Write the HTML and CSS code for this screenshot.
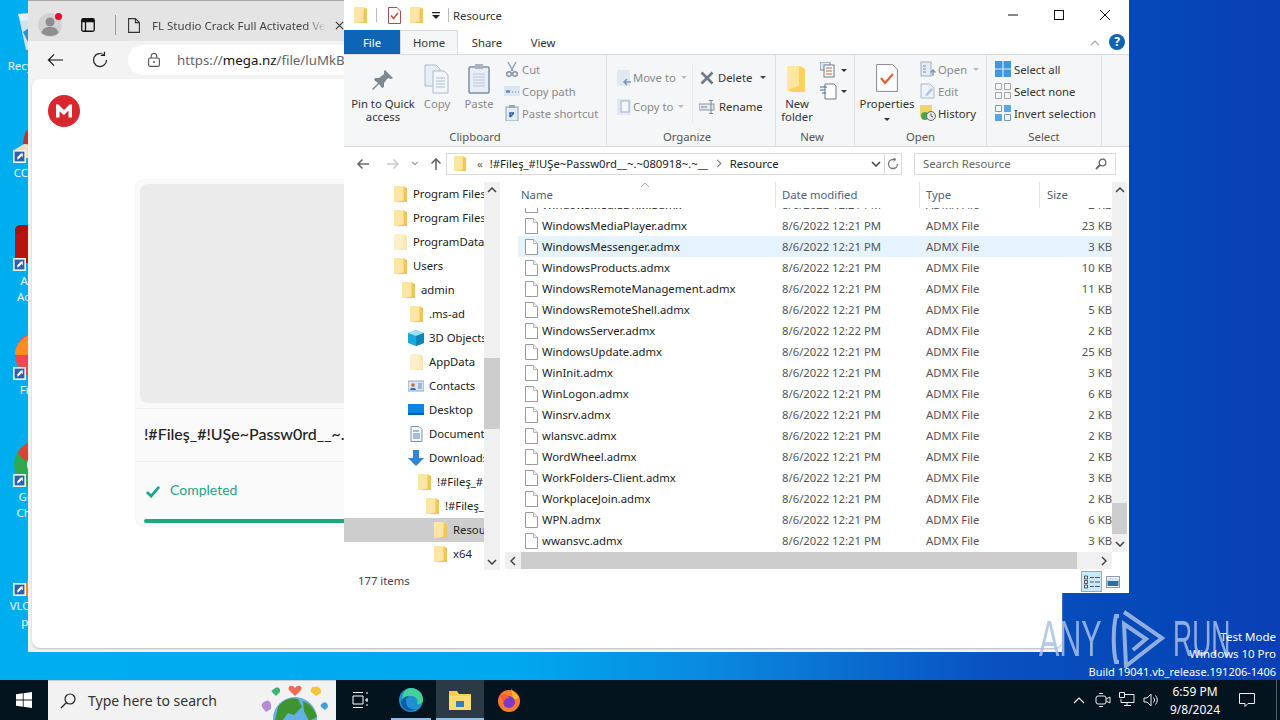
FILE: index.html
```html
<!DOCTYPE html>
<html lang="en">
<head>
<meta charset="utf-8">
<title>Resource</title>
<link rel="stylesheet" href="styles.css">
</head>
<body>
<svg class="sprite" aria-hidden="true">
  <symbol id="folder" viewBox="0 0 14 18"><path d="M0 1h9.500l3.500 2v14H0z" fill="#fddc84"/><path d="M10 1.500l3 1.500v14H2.500l7-1.500z" fill="#f2c558"/><path d="M0 1h9v14.500L0 17z" fill="#fee5a0"/></symbol>
  <symbol id="folder-light" viewBox="0 0 14 18"><path d="M0 1h9.500l3.500 2v14H0z" fill="#fdf0c8"/><path d="M10 1.500l3 1.500v14H2.500l7-1.500z" fill="#f8e6b4"/></symbol>
  <symbol id="file" viewBox="0 0 13 16"><path d="M.5.500h8l4 4v11H.5z" fill="#fff" stroke="#9a9a9a"/><path d="M8.500.500v4h4" fill="#f2f2f2" stroke="#b5b5b5"/></symbol>
  <symbol id="chk" viewBox="0 0 13 17"><path d="M.5.500h8.500l3.500 3.500v12.500H.5z" fill="#fff" stroke="#a05050"/><path d="M3 8.500l2.500 3L10 6" fill="none" stroke="#d9463a" stroke-width="1.500"/></symbol>
  <symbol id="chev-down" viewBox="0 0 10 6"><path d="M1 1l4 4 4-4" fill="none" stroke="#444" stroke-width="1.500"/></symbol>
  <symbol id="chev-up" viewBox="0 0 10 6"><path d="M1 5l4-4 4 4" fill="none" stroke="#444" stroke-width="1.500"/></symbol>
  <symbol id="shortcut" viewBox="0 0 12 12"><rect width="12" height="12" fill="#f4f4f4"/><rect x="1.500" y="1.500" width="9" height="9" fill="#2f5fa5"/><path d="M4 9V6.500L7 4H5l4-1v4L8 5.500 5.500 8z" fill="#fff"/></symbol>
</svg>

<main class="desktop">
  <div class="dicon d-recycle"><svg class="dglyph" viewBox="0 0 48 48"><path d="M4 4l34-2 4 8-4 30H12L6 12z" fill="#cfe2ee"/><path d="M4 4l34-2-1 6-30 3z" fill="#e6f0f6"/><path d="M9 22l6-4 4 8-5 6z" fill="#2f8fd0"/></svg><span>Recycle Bin</span></div>
  <div class="dicon d-cc"><svg class="dglyph" viewBox="0 0 48 48"><path d="M9 26C10 20 11 14 13 13l20 8v20H9z" fill="#b93a2a"/><path d="M0 33l10-6 30 2v12H0z" fill="#f2dcc4"/></svg><svg class="sc"><use href="#shortcut"/></svg><span>CCleaner</span></div>
  <div class="dicon d-adobe"><svg class="dglyph" viewBox="0 0 48 48"><rect x="1" y="0" width="46" height="38" rx="5" fill="#a8120e"/><path d="M1 10c8-6 16-6 24-8v36H1z" fill="#b8140f"/></svg><svg class="sc"><use href="#shortcut"/></svg><span>Adobe<br>Acrobat</span></div>
  <div class="dicon d-fox"><svg class="dglyph" viewBox="0 0 48 48"><circle cx="24" cy="21" r="23" fill="#f2474f"/><path d="M1 18C3 8 10 3 16 1c-2 4 0 7 4 8l12 12H1z" fill="#ff8a1f"/></svg><svg class="sc"><use href="#shortcut"/></svg><span>Firefox</span></div>
  <div class="dicon d-chrome"><svg class="dglyph" viewBox="0 0 48 48"><circle cx="24" cy="24" r="24" fill="#2fa84f"/><path d="M3 12a24 24 0 0 1 42 0H24l-12 8z" fill="#db4437"/><circle cx="24" cy="24" r="11" fill="#eeeeee"/></svg><svg class="sc"><use href="#shortcut"/></svg><span>Google<br>Chrome</span></div>
  <div class="dicon d-vlc"><svg class="dglyph" viewBox="0 0 48 48"><path d="M6 46L16 26l8 0 4 20z" fill="#e98a1c"/></svg><svg class="sc"><use href="#shortcut"/></svg><span>VLC media<br>player</span></div>

  <section class="browser">
    <div class="tabstrip">
      <div class="avatar"><svg viewBox="0 0 24 24" class="avatar-svg"><circle cx="12" cy="12" r="12" fill="#d2d2d2"/><circle cx="12" cy="9" r="4.500" fill="#8f8f8f"/><path d="M3.500 20c1-5 4-6 8.500-6s7.500 1 8.500 6c-4 4-13 4-17 0z" fill="#8f8f8f"/></svg><i class="dot"></i></div>
      <svg class="tabs-ico" viewBox="0 0 14 14"><rect x=".75" y=".75" width="12.500" height="12.500" rx="1.500" fill="none" stroke="#111" stroke-width="1.300"/><path d="M.75 3.500h12.500M4.500 3.500v9.500" stroke="#111" stroke-width="1.300" fill="none"/><rect x="1" y="1" width="12" height="2.500" fill="#111"/></svg>
      <i class="tab-sep"></i>
      <svg class="tab-doc" viewBox="0 0 12 15"><path d="M.6.600h6.800l4 4v9.800H.6z M7.400.600v4h4" fill="none" stroke="#333" stroke-width="1.100"/></svg>
      <span class="tab-title">FL Studio Crack Full Activated Version</span>
      <svg class="tab-x" viewBox="0 0 10 10"><path d="M1 1l8 8M9 1l-8 8" stroke="#333" stroke-width="1.200"/></svg>
    </div>
    <div class="toolbar">
      <svg class="tb-back" viewBox="0 0 18 14"><path d="M17 7H1.500M7.500 1L1.500 7l6 6" fill="none" stroke="#111" stroke-width="1.200"/></svg>
      <svg class="tb-reload" viewBox="0 0 18 18"><path d="M15.500 9A6.500 6.500 0 1 1 13 3.900" fill="none" stroke="#222" stroke-width="1.200"/><path d="M13.500 .8v3.700H9.800" fill="none" stroke="#222" stroke-width="1.200"/></svg>
      <div class="url">
        <svg class="lock" viewBox="0 0 12 14"><rect x=".6" y="5" width="10.800" height="8.400" rx="1.500" fill="none" stroke="#555" stroke-width="1.100"/><path d="M3.200 5V3.200a2.800 2.800 0 0 1 5.600 0V5" fill="none" stroke="#555" stroke-width="1.100"/><circle cx="6" cy="9" r="1" fill="#555"/></svg>
        <span class="url-text">https://<b>mega.nz</b>/file/luMkBC</span>
      </div>
    </div>
    <div class="page">
      <svg class="mega" viewBox="0 0 32 32"><circle cx="16" cy="16" r="16" fill="#d9272e"/><path d="M8 22.500V9.500h2.500L16 15l5.500-5.500H24v13h-3.500v-7L16 20l-4.500-3.500v6z" fill="#fff"/></svg>
      <div class="card">
        <div class="preview"></div>
        <div class="fname">!#Fileş_#!UŞe~Passw0rd__~.~080918~.~__.zip</div>
        <div class="done"><svg class="tick" viewBox="0 0 16 14"><path d="M1.500 7.500l4.500 4.500 8.500-10" fill="none" stroke="#17a88b" stroke-width="3"/></svg><span>Completed</span></div>
        <div class="bar"></div>
      </div>
    </div>
  </section>

  <section class="explorer">
    <header class="titlebar">
      <svg class="qa qa1"><use href="#folder"/></svg><i class="qa-sep"></i>
      <svg class="qa qa2"><use href="#chk"/></svg>
      <svg class="qa qa3"><use href="#folder"/></svg>
      <svg class="qa-drop" viewBox="0 0 8 7"><path d="M0 0h8v1.200H0zM0 3h8L4 7z" fill="#222"/></svg><i class="qa-sep sep2"></i>
      <span class="wintitle">Resource</span>
      <div class="winbtns">
        <svg viewBox="0 0 12 12" class="wb"><path d="M1 6h10" stroke="#111"/></svg>
        <svg viewBox="0 0 12 12" class="wb"><rect x="1.500" y="1.500" width="9" height="9" fill="none" stroke="#111"/></svg>
        <svg viewBox="0 0 12 12" class="wb"><path d="M1 1l10 10M11 1L1 11" stroke="#111"/></svg>
      </div>
    </header>
    <nav class="tabs">
      <span class="t-file">File</span><span class="t-home">Home</span><span class="t-share">Share</span><span class="t-view">View</span>
      <svg class="collapse" viewBox="0 0 10 6"><path d="M1 5l4-4 4 4" fill="none" stroke="#aaa" stroke-width="1.200"/></svg>
      <span class="help">?</span>
    </nav>
    <div class="ribbon">
      <div class="group g-clip">
        <div class="gbody">
          <div class="big w-pin"><svg class="bigico pinico" viewBox="0 0 24 24"><path d="M14 2l8 8-2 1-3-1-4 5 0 4-2 1-3-4-6 6-1-1 6-6-4-3 1-2h4l5-4-0-3z" fill="#7f8790"/></svg><span>Pin to Quick<br>access</span></div>
          <div class="big w-copy dis"><svg class="bigico copyico" viewBox="0 0 26 30"><path d="M1 1h11l4 4v17H1z" fill="#e8eef6" stroke="#a9bbd2"/><path d="M9 7h11l4 4v18H9z" fill="#f3f6fa" stroke="#a9bbd2"/><path d="M12 14h9M12 17h9M12 20h9M12 23h9" stroke="#a9bbd2"/></svg><span>Copy</span></div>
          <div class="big w-paste dis"><svg class="bigico pasteico" viewBox="0 0 22 30"><rect x="1" y="3" width="20" height="26" rx="1" fill="#e9eef5" stroke="#7f8fa6" stroke-width="1.500"/><rect x="7" y="0" width="8" height="5" fill="#aab4c2"/><path d="M5 10h12M5 13h12M5 16h12M5 19h12M5 22h12" stroke="#b9c6d8"/></svg><span>Paste</span></div>
          <div class="smalls s-clip dis">
            <div class="sm"><svg class="ic16" viewBox="0 0 16 16"><path d="M4 1l5 9M12 1L7 10" stroke="#8ea3bd" stroke-width="1.500" fill="none"/><circle cx="5" cy="13" r="2.300" fill="none" stroke="#7f8ea3" stroke-width="1.400"/><circle cx="11" cy="13" r="2.300" fill="none" stroke="#7f8ea3" stroke-width="1.400"/></svg><span>Cut</span></div>
            <div class="sm"><svg class="ic16" viewBox="0 0 16 16"><rect y="3" width="16" height="10" fill="#dbe6f3"/><path d="M2 7l1 3 1-3 1 3 1-3M8 9h1M11 9h1M14 9h1" stroke="#6f8bad" fill="none"/></svg><span>Copy path</span></div>
            <div class="sm"><svg class="ic16" viewBox="0 0 16 16"><rect x="2" y="2" width="12" height="14" fill="#e3ebf5" stroke="#8fa3bc"/><rect x="5" y="0" width="6" height="3" fill="#9aa8ba"/><path d="M6 12V8h4M6 12l4-4" stroke="#2f5fa5" stroke-width="1.500" fill="none"/></svg><span>Paste shortcut</span></div>
          </div>
        </div>
        <div class="glabel">Clipboard</div>
      </div>
      <div class="group g-org">
        <div class="gbody">
          <div class="rows2 r-move dis">
            <div class="sm2"><svg class="ic16" viewBox="0 0 16 16"><rect x="1" y="0" width="13" height="16" fill="#e1e8f1"/><path d="M15 12H8M11 9l-3 3 3 3" stroke="#7d95b3" stroke-width="1.500" fill="none"/></svg><span>Move to</span><i class="caret light"></i></div>
            <div class="sm2"><svg class="ic16" viewBox="0 0 16 16"><rect x="1" y="0" width="14" height="16" fill="#e1e8f1"/><rect x="5" y="2" width="8" height="11" fill="#f4f7fb" stroke="#9eb1c8"/></svg><span>Copy to</span><i class="caret light"></i></div>
          </div>
          <i class="vsep"></i>
          <div class="rows2 r-del">
            <div class="sm2"><svg class="ic14" viewBox="0 0 14 14"><path d="M1.500 1.500l11 11M12.500 1.500l-11 11" stroke="#6c7a8a" stroke-width="2.600"/></svg><span>Delete</span><i class="caret"></i></div>
            <div class="sm2"><svg class="ic14 ren" viewBox="0 0 16 14"><rect x="0" y="4" width="15" height="6" fill="#e4e9ef" stroke="#8a97a6"/><path d="M12 0v14M10 .5h4M10 13.500h4" stroke="#7a8796"/><path d="M2 7h6" stroke="#7a8796"/></svg><span>Rename</span></div>
          </div>
        </div>
        <div class="glabel">Organize</div>
      </div>
      <div class="group g-new">
        <div class="gbody">
          <div class="big w-newf"><svg class="newico" viewBox="0 0 20 28"><path d="M0 1h13l5 3v23H5l-5-2z" fill="#fbd25f"/><path d="M0 1h12v20L0 25z" fill="#ffe79c"/></svg><span>New<br>folder</span></div>
          <div class="newsm">
            <div class="ns"><svg class="ic20" viewBox="0 0 20 17"><rect x="0" y="0" width="10" height="8" fill="#dbe8f5" stroke="#6d8fb3"/><rect x="4" y="3" width="10" height="12" fill="#fff" stroke="#777"/><path d="M6 6h6M6 9h6M6 12h6" stroke="#c2603f"/></svg><i class="caret dark"></i></div>
            <div class="ns"><svg class="ic20" viewBox="0 0 20 17"><path d="M5 1h9l2 2v13H5z" fill="#fff" stroke="#777"/><path d="M0 4h7M0 7h5M2 10h4" stroke="#2f6fb5" stroke-width="1.200"/></svg><i class="caret dark"></i></div>
          </div>
        </div>
        <div class="glabel">New</div>
      </div>
      <div class="group g-open">
        <div class="gbody">
          <div class="big w-prop"><svg class="propico" viewBox="0 0 22 28"><path d="M.6.600h16l4.800 5v21.800H.6z" fill="#fff" stroke="#888"/><path d="M5 14l4 5 8-9" fill="none" stroke="#e0603a" stroke-width="2.200"/></svg><span>Properties</span><i class="caret dark center"></i></div>
          <div class="smalls s-open">
            <div class="sm dis"><svg class="ic16" viewBox="0 0 16 16"><rect x="1" y="1" width="10" height="14" fill="#e4ebf3" stroke="#9db0c6"/><path d="M3 5h3M3 8h3M3 11h3" stroke="#7c8da3"/><path d="M13 9v6M10.500 11.500L13 9l2.500 2.500" stroke="#7d95b3" stroke-width="1.400" fill="none"/></svg><span>Open</span><i class="caret light"></i></div>
            <div class="sm dis"><svg class="ic16" viewBox="0 0 16 16"><path d="M1 1h9l4 4v10H1z" fill="#eef3f8" stroke="#a7bad0"/><path d="M5 12l6-7 2 2-6 6z" fill="#a9c7e6"/></svg><span>Edit</span></div>
            <div class="sm"><svg class="ic16" viewBox="0 0 16 16"><rect x="0" y="0" width="12" height="12" fill="#f1d46e"/><circle cx="5" cy="11" r="4" fill="#4ba84a"/><circle cx="11" cy="11" r="4.500" fill="#e8e8e8" stroke="#666"/><path d="M11 8.500V11l2 1" stroke="#555" fill="none"/></svg><span>History</span></div>
          </div>
        </div>
        <div class="glabel">Open</div>
      </div>
      <div class="group g-sel">
        <div class="gbody">
          <div class="smalls s-sel">
            <div class="sm"><svg class="ic16" viewBox="0 0 16 16"><rect width="16" height="16" fill="#3f97e0"/><path d="M8 0v16M0 8h16" stroke="#d6ecfb" stroke-width="1.200"/></svg><span>Select all</span></div>
            <div class="sm"><svg class="ic16" viewBox="0 0 16 16"><path d="M.5.500h6v6h-6zM9.500.500h6v6h-6zM.5 9.500h6v6h-6zM9.500 9.500h6v6h-6z" fill="none" stroke="#a5a5a5"/></svg><span>Select none</span></div>
            <div class="sm"><svg class="ic16" viewBox="0 0 16 16"><path d="M9 0h7v7H9zM0 9h7v7H0z" fill="#58a8e6"/><path d="M.5.500h6v6h-6zM9.500 9.500h6v6h-6z" fill="none" stroke="#6f9cc4"/></svg><span>Invert selection</span></div>
          </div>
        </div>
        <div class="glabel">Select</div>
      </div>
    </div>
    <div class="addrbar">
      <svg class="nav nav-back" viewBox="0 0 14 12"><path d="M13 6H2M6.500 1.500L2 6l4.500 4.500" fill="none" stroke="#6a6a6a" stroke-width="1.600"/></svg>
      <svg class="nav nav-fwd" viewBox="0 0 14 12"><path d="M1 6h11M7.500 1.500L12 6l-4.500 4.500" fill="none" stroke="#ccc" stroke-width="1.600"/></svg>
      <svg class="nav-dn" viewBox="0 0 10 6"><path d="M1.500 1L5 4.500 8.500 1" fill="none" stroke="#999" stroke-width="1.300"/></svg>
      <svg class="nav nav-up" viewBox="0 0 12 14"><path d="M6 13V2M1.500 6.500L6 2l4.500 4.500" fill="none" stroke="#6a6a6a" stroke-width="1.600"/></svg>
      <div class="addr">
        <svg class="addr-folder"><use href="#folder"/></svg>
        <span class="bc-more">«</span>
        <span class="bc">!#Fileş_#!UŞe~Passw0rd__~.~080918~.~__</span>
        <svg class="bc-sep" viewBox="0 0 6 10"><path d="M1 1l4 4-4 4" fill="none" stroke="#777" stroke-width="1.200"/></svg>
        <span class="bc bc-last">Resource</span>
        <svg class="addr-dd" viewBox="0 0 10 6"><use href="#chev-down"/></svg>
        <span class="addr-ref"><svg viewBox="0 0 12 12" class="refico"><path d="M10.500 6A4.500 4.500 0 1 1 6 1.500h2" fill="none" stroke="#777" stroke-width="1.300"/><path d="M6.500 0L9 1.500 6.500 3.500" fill="none" stroke="#777"/></svg></span>
      </div>
      <div class="search"><span>Search Resource</span><svg class="mag" viewBox="0 0 12 12"><circle cx="7.500" cy="4.500" r="3.300" fill="none" stroke="#666" stroke-width="1.300"/><path d="M5 7l-4 4" stroke="#666" stroke-width="1.800"/></svg></div>
    </div>
    <div class="content">
      <div class="tree">
        <ul class="tree-list">
          <li class="l0"><svg class="tf"><use href="#folder"/></svg><span>Program Files</span></li>
          <li class="l0"><svg class="tf"><use href="#folder"/></svg><span>Program Files (x86)</span></li>
          <li class="l0"><svg class="tf"><use href="#folder-light"/></svg><span>ProgramData</span></li>
          <li class="l0"><svg class="tf"><use href="#folder"/></svg><span>Users</span></li>
          <li class="l1"><svg class="tf"><use href="#folder"/></svg><span>admin</span></li>
          <li class="l2"><svg class="tf"><use href="#folder"/></svg><span>.ms-ad</span></li>
          <li class="l2s"><svg class="ts" viewBox="0 0 16 16"><path d="M8 0l8 3v10l-8 3-8-3V3z" fill="#1aa6d8"/><path d="M8 0l8 3-8 3-8-3z" fill="#9be4f4"/><path d="M8 6l8-3v10l-8 3z" fill="#0c86b8"/></svg><span>3D Objects</span></li>
          <li class="l2"><svg class="tf"><use href="#folder-light"/></svg><span>AppData</span></li>
          <li class="l2s"><svg class="ts" viewBox="0 0 16 16"><rect y="3" width="16" height="10" fill="#d6e5f3" stroke="#8fa8c2"/><circle cx="5" cy="7" r="1.800" fill="#c06a3a"/><path d="M2 12c0-3 6-3 6 0z" fill="#2f6fb5"/><path d="M10 6h4M10 8h4M10 10h4" stroke="#6f8bad"/></svg><span>Contacts</span></li>
          <li class="l2s"><svg class="ts" viewBox="0 0 16 16"><rect y="2" width="16" height="11" fill="#0a84e0"/><rect y="11" width="16" height="2" fill="#0960a8"/></svg><span>Desktop</span></li>
          <li class="l2s"><svg class="ts" viewBox="0 0 16 16"><path d="M3 .5h8l3 3v12H3z" fill="#f4f7fb" stroke="#7f93a8"/><path d="M5 5h6M5 8h7M5 10h7M5 12h7" stroke="#4d86bf"/></svg><span>Documents</span></li>
          <li class="l2s"><svg class="ts" viewBox="0 0 16 16"><path d="M5 0h6v8h5l-8 8-8-8h5z" fill="#2f86d9"/></svg><span>Downloads</span></li>
          <li class="l3"><svg class="tf"><use href="#folder"/></svg><span>!#Fileş_#!UŞe~Passw0rd</span></li>
          <li class="l4"><svg class="tf"><use href="#folder"/></svg><span>!#Fileş_#!UŞe~Passw0rd</span></li>
          <li class="l5 sel"><svg class="tf"><use href="#folder"/></svg><span>Resource</span></li>
          <li class="l5"><svg class="tf"><use href="#folder"/></svg><span>x64</span></li>
        </ul>
        <div class="vscroll tree-scroll">
          <svg class="sa" viewBox="0 0 10 6"><use href="#chev-up"/></svg>
          <div class="track"><div class="thumb t-tree"></div></div>
          <svg class="sa" viewBox="0 0 10 6"><use href="#chev-down"/></svg>
        </div>
      </div>
      <div class="pane">
        <div class="pane-top">
          <div class="listwrap">
            <div class="lhead">
              <span class="h h-name">Name</span><span class="h h-date">Date modified</span><span class="h h-type">Type</span><span class="h h-size">Size</span>
              <svg class="sortcaret" viewBox="0 0 10 6"><path d="M1 5l4-4 4 4" fill="none" stroke="#aaa"/></svg>
            </div>
            <div class="rows">
              <div class="row"><span class="n"><svg class="fi"><use href="#file"/></svg>WindowsMediaDRM.admx</span><span>8/6/2022 12:21 PM</span><span>ADMX File</span><span class="s">2 KB</span></div>
              <div class="row"><span class="n"><svg class="fi"><use href="#file"/></svg>WindowsMediaPlayer.admx</span><span>8/6/2022 12:21 PM</span><span>ADMX File</span><span class="s">23 KB</span></div>
              <div class="row hov"><span class="n"><svg class="fi"><use href="#file"/></svg>WindowsMessenger.admx</span><span>8/6/2022 12:21 PM</span><span>ADMX File</span><span class="s">3 KB</span></div>
              <div class="row"><span class="n"><svg class="fi"><use href="#file"/></svg>WindowsProducts.admx</span><span>8/6/2022 12:21 PM</span><span>ADMX File</span><span class="s">10 KB</span></div>
              <div class="row"><span class="n"><svg class="fi"><use href="#file"/></svg>WindowsRemoteManagement.admx</span><span>8/6/2022 12:21 PM</span><span>ADMX File</span><span class="s">11 KB</span></div>
              <div class="row"><span class="n"><svg class="fi"><use href="#file"/></svg>WindowsRemoteShell.admx</span><span>8/6/2022 12:21 PM</span><span>ADMX File</span><span class="s">5 KB</span></div>
              <div class="row"><span class="n"><svg class="fi"><use href="#file"/></svg>WindowsServer.admx</span><span>8/6/2022 12:22 PM</span><span>ADMX File</span><span class="s">2 KB</span></div>
              <div class="row"><span class="n"><svg class="fi"><use href="#file"/></svg>WindowsUpdate.admx</span><span>8/6/2022 12:21 PM</span><span>ADMX File</span><span class="s">25 KB</span></div>
              <div class="row"><span class="n"><svg class="fi"><use href="#file"/></svg>WinInit.admx</span><span>8/6/2022 12:21 PM</span><span>ADMX File</span><span class="s">3 KB</span></div>
              <div class="row"><span class="n"><svg class="fi"><use href="#file"/></svg>WinLogon.admx</span><span>8/6/2022 12:21 PM</span><span>ADMX File</span><span class="s">6 KB</span></div>
              <div class="row"><span class="n"><svg class="fi"><use href="#file"/></svg>Winsrv.admx</span><span>8/6/2022 12:21 PM</span><span>ADMX File</span><span class="s">2 KB</span></div>
              <div class="row"><span class="n"><svg class="fi"><use href="#file"/></svg>wlansvc.admx</span><span>8/6/2022 12:21 PM</span><span>ADMX File</span><span class="s">2 KB</span></div>
              <div class="row"><span class="n"><svg class="fi"><use href="#file"/></svg>WordWheel.admx</span><span>8/6/2022 12:21 PM</span><span>ADMX File</span><span class="s">2 KB</span></div>
              <div class="row"><span class="n"><svg class="fi"><use href="#file"/></svg>WorkFolders-Client.admx</span><span>8/6/2022 12:21 PM</span><span>ADMX File</span><span class="s">3 KB</span></div>
              <div class="row"><span class="n"><svg class="fi"><use href="#file"/></svg>WorkplaceJoin.admx</span><span>8/6/2022 12:21 PM</span><span>ADMX File</span><span class="s">2 KB</span></div>
              <div class="row"><span class="n"><svg class="fi"><use href="#file"/></svg>WPN.admx</span><span>8/6/2022 12:21 PM</span><span>ADMX File</span><span class="s">6 KB</span></div>
              <div class="row"><span class="n"><svg class="fi"><use href="#file"/></svg>wwansvc.admx</span><span>8/6/2022 12:21 PM</span><span>ADMX File</span><span class="s">3 KB</span></div>
            </div>
          </div>
          <div class="vscroll list-scroll">
            <svg class="sa" viewBox="0 0 10 6"><use href="#chev-up"/></svg>
            <div class="track"><div class="thumb t-list"></div></div>
            <svg class="sa" viewBox="0 0 10 6"><use href="#chev-down"/></svg>
          </div>
        </div>
        <div class="hscroll">
          <svg class="sah" viewBox="0 0 6 10"><path d="M5 1L1 5l4 4" fill="none" stroke="#444" stroke-width="1.500"/></svg>
          <div class="hthumb"></div><div class="hrest"></div>
          <svg class="sah" viewBox="0 0 6 10"><path d="M1 1l4 4-4 4" fill="none" stroke="#444" stroke-width="1.500"/></svg>
        </div>
      </div>
    </div>
    <footer class="status">
      <span class="count">177 items</span>
      <div class="views">
        <span class="v-det"><svg viewBox="0 0 16 14" class="v-ico"><path d="M.5 1h3v3h-3zM.5 5.500h3v3h-3zM.5 10h3v3h-3z" fill="none" stroke="#555"/><path d="M6 2.500h4M11 2.500h5M6 7h4M11 7h5M6 11.500h4M11 11.500h5" stroke="#555"/></svg></span>
        <span class="v-lrg"><svg viewBox="0 0 14 12" class="v-ico2"><rect x=".5" y=".5" width="13" height="11" fill="#fff" stroke="#8a9aaa"/><rect x="1.500" y="4" width="11" height="6" fill="#2a6fa8"/><rect x="1.500" y="2" width="11" height="3" fill="#cfe3f2"/></svg></span>
      </div>
    </footer>
  </section>

  <div class="watermark">
    <span class="wm-t wm-any">ANY</span>
    <svg class="wm-logo" viewBox="0 0 55 58"><path d="M9 6H6C3 18 3 40 6 52h3M14 2l38 26-36 28L14 14l22 15-13 11" fill="none" stroke="#a9c0e8" stroke-width="4"/></svg>
    <span class="wm-t wm-run">RUN</span>
  </div>
  <div class="sysinfo"><span>Test Mode</span><span class="edition">Windows 10 Pro</span><span class="build">Build 19041.vb_release.191206-1406</span></div>

  <footer class="taskbar">
    <svg class="start" viewBox="0 0 16 16"><path d="M0 2.300l6.800-1v6.300H0zM7.600 1.200L16 0v7.600H7.600zM0 8.400h6.800v6.300l-6.800-1zM7.600 8.400H16V16l-8.400-1.200z" fill="#fff"/></svg>
    <div class="searchbox">
      <svg class="sb-mag" viewBox="0 0 16 16"><circle cx="10" cy="6" r="5" fill="none" stroke="#222" stroke-width="1.200"/><path d="M6.500 9.500L1 15" stroke="#222" stroke-width="1.300"/></svg>
      <span class="sb-text">Type here to search</span>
      <svg class="doodle" viewBox="0 0 72 40"><circle cx="36" cy="38" r="22" fill="#63b0e6"/><path d="M19 26c6-8 14-10 20-8l4 8-8 8-6-2-6 8H16zM44 20c6 2 12 8 14 16l-8 4-5-10z" fill="#3f9330"/><path d="M36 7c-3-4-8-2-6 2l6 6 6-6c2-4-3-6-6-2z" fill="#ef6a55"/><path d="M55 6c4-2 8 2 7 6l-5 3-5-4c-1-3 1-5 3-5z" fill="#f2c63a"/><path d="M15 8c3-3 7-1 6 3l-4 4-4-4c-1-1 0-2 2-3z" fill="#3cb371"/><path d="M7 20c3-2 6 2 5 8l-5 3-4-5c-1-3 1-5 4-6z" fill="#b58ad6"/><path d="M64 22c2-2 5 0 5 4l-3 3-4-3c-1-2 0-3 2-4z" fill="#3f9fe0"/></svg>
    </div>
    <svg class="taskview" viewBox="0 0 16 16"><path d="M1 .5h10M1 15.500h10M1 4h10v8H1zM14 1h2M14 7h2v2h-2zM14 13h2" stroke="#fff" fill="none"/></svg>
    <div class="tb-item ti-edge"><svg class="tb-app" viewBox="0 0 24 24"><circle cx="12" cy="12" r="12" fill="#1f8fd0"/><path d="M12 0a12 12 0 0 1 12 12c0 3-3 5-6 4 2-4-1-8-6-8-5 0-8 3-9 5C3 6 6 0 12 0z" fill="#41d29a"/><path d="M7 14c0 5 5 8 9 7-5 4-13 1-14-7 1-4 5-6 8-6-2 1-3 3-3 6z" fill="#0c5ea8"/></svg></div>
    <div class="tb-item ti-exp"><svg class="tb-app" viewBox="0 0 24 24"><path d="M1 3h8l2 3h12v16H1z" fill="#f7cf4e"/><rect x="1" y="8" width="22" height="14" fill="#fbdc6e"/><rect x="8" y="13" width="8" height="6" fill="#2f7fc1"/></svg></div>
    <div class="tb-item ti-fox"><svg class="tb-app" viewBox="0 0 24 24"><circle cx="12" cy="13" r="11" fill="#ff7b2a"/><path d="M14 0c1 4 6 5 8 10l-6 2z" fill="#ffb52e"/><circle cx="12" cy="14" r="6" fill="#7b3bc8"/><path d="M3 8c4-3 8-1 9 2-3 0-5 2-5 5z" fill="#ff5a3c"/></svg></div>
    <div class="tray">
      <svg class="tr tr-up" viewBox="0 0 12 8"><path d="M1 7l5-5 5 5" fill="none" stroke="#eee" stroke-width="1.200"/></svg>
      <svg class="tr" viewBox="0 0 16 16"><rect x="1" y="4" width="10" height="8" rx="2" fill="none" stroke="#eee"/><path d="M11 7l4-2v6l-4-2M4 1.500h4M4 14.500h4" fill="none" stroke="#eee"/></svg>
      <svg class="tr" viewBox="0 0 16 16"><path d="M5.500 2.500H15v8H2V7M8 10.500v3M5 13.500h7M.5.500h5v5h-5z" fill="none" stroke="#eee"/></svg>
      <svg class="tr tr-last" viewBox="0 0 16 16"><path d="M1 6h3l4-4v12l-4-4H1zM10.500 5.500a3.500 3.500 0 0 1 0 5M12.500 3.500a6.500 6.500 0 0 1 0 9" fill="none" stroke="#eee"/></svg>
      <div class="clock"><span>6:59 PM</span><span>9/8/2024</span></div>
      <svg class="notif" viewBox="0 0 16 16"><path d="M.5 1.500h15v10H9L6 14.500v-3H.5z" fill="none" stroke="#eee"/></svg>
      <i class="showdesk"></i>
    </div>
  </footer>
</main>
</body>
</html>
```
FILE: styles.css
```css
* { box-sizing: border-box; }
html, body { margin: 0; height: 100%; }
body { font-family: "Noto Sans", "Liberation Sans", sans-serif; font-size: 12px; color: #333; overflow: hidden; }
i { display: block; font-style: normal; }
svg { display: block; flex: none; }
.sprite { position: absolute; width: 0; height: 0; }

.desktop { position: relative; width: 1280px; height: 720px; overflow: hidden;
  background: linear-gradient(90deg, #00aeef 0, #00a8f0 40%, #0a8ae0 55%, #0a50c0 78%, #0548b8 90%, #0a3fb5 100%); }

/* desktop icons: free canvas */
.dicon { position: absolute; left: 0; width: 76px; display: flex; flex-direction: column; align-items: center; color: #eaf6ff; font-size: 11.5px; line-height: 16px; text-align: center; }
.dglyph { width: 48px; height: 48px; }
.sc { position: absolute; left: 13px; top: 33px; width: 13px; height: 13px; }
.d-recycle { top: 10px; }
.d-cc { top: 117px; }
.d-adobe { top: 225px; }
.d-fox { top: 334px; }
.d-chrome { top: 441px; }
.d-vlc { top: 550px; }

/* browser window */
.browser { position: absolute; left: 28px; top: 0; width: 1034px; height: 652px; background: #f3f3f3; display: flex; flex-direction: column; border-top: 1px solid #a8a8a8; }
.tabstrip { height: 40px; background: #e4e4e4; display: flex; align-items: center; padding: 8px 0 0 10px; }
.avatar { position: relative; width: 24px; height: 24px; }
.avatar-svg { width: 24px; height: 24px; }
.dot { position: absolute; top: 0; right: 0; width: 7px; height: 7px; border-radius: 50%; background: #e0102a; }
.tabs-ico { width: 14px; height: 14px; margin-left: 19px; }
.tab-sep { width: 1px; height: 20px; background: #9a9a9a; margin-left: 20px; }
.tab-doc { width: 12px; height: 15px; margin-left: 12px; }
.tab-title { width: 174px; margin-left: 12px; white-space: nowrap; overflow: hidden; color: #444; font-size: 11.5px; -webkit-mask-image: linear-gradient(90deg, #000 88%, transparent); mask-image: linear-gradient(90deg, #000 88%, transparent); }
.tab-x { width: 9px; height: 9px; margin-left: 9px; }
.toolbar { height: 38px; display: flex; align-items: center; padding-left: 19px; }
.tb-back { width: 17px; height: 14px; }
.tb-reload { width: 18px; height: 18px; margin-left: 27px; }
.url { flex: 1; height: 30px; margin-left: 19px; background: #fff; border-radius: 15px; display: flex; align-items: center; padding-left: 20px; }
.lock { width: 12px; height: 14px; }
.url-text { margin-left: 17px; font-size: 13.3px; color: #666; white-space: nowrap; }
.url-text b { font-weight: 400; color: #111; }
.page { flex: 1; margin: 0 0 4px 4px; background: #fff; border-radius: 8px; padding: 16px 0 0 16px; box-shadow: 0 1px 2px #bbb; }
.mega { width: 32px; height: 32px; }
.card { width: 820px; margin: 53px 0 0 88px; height: 346px; padding: 4px; background: #fafafa; border-radius: 8px; box-shadow: 0 0 2px #ddd; display: flex; flex-direction: column; }
.preview { height: 219px; flex: none; background: #ebebeb; border-radius: 8px; }
.fname { height: 54px; flex: none; margin: 5px -4px 0; padding: 0 0 0 8px; border-top: 1px solid #efefef; border-bottom: 1px solid #efefef; font: 500 16px/50px "Lato", sans-serif; color: #222; white-space: nowrap; overflow: hidden; }
.done { height: 57px; flex: none; display: flex; align-items: center; padding: 0 0 2px 5px; color: #1ca38a; font: 400 14px "Lato", sans-serif; }
.tick { width: 16px; height: 13px; margin-right: 9px; margin-top: 3px; }
.bar { height: 4px; flex: none; margin-left: 4px; background: #1fa67f; border-radius: 2px; }

/* explorer window */
.explorer { position: absolute; left: 344px; top: 0; width: 785px; height: 593px; background: #fff; display: flex; flex-direction: column; font-size: 11.3px; }
.titlebar { height: 30px; flex: none; display: flex; align-items: center; padding-left: 10px; }
.qa { width: 14px; height: 18px; }
.qa-sep { width: 1px; height: 14px; background: #bbb; margin-left: 8px; }
.qa2 { width: 13px; height: 17px; margin-left: 11px; }
.qa3 { margin-left: 9px; }
.qa-drop { width: 8px; height: 7px; margin-left: 8px; }
.sep2 { margin-left: 8px; }
.wintitle { margin-left: 4px; color: #333; }
.winbtns { margin-left: auto; display: flex; gap: 34px; padding-right: 18px; }
.wb { width: 12px; height: 12px; }
.tabs { height: 24px; flex: none; display: flex; align-items: stretch; line-height: 25px; position: relative; }
.tabs span { text-align: center; }
.t-file { width: 56px; background: #0f65b5; color: #fff; }
.t-home { width: 58px; background: #f5f6f7; border: 1px solid #dadbdc; border-bottom: 0; line-height: 23px; color: #333; }
.t-share { width: 58px; }
.t-view { width: 54px; }
.collapse { width: 10px; height: 6px; margin: 10px 0 0 520px; }
.tabs .help { width: 16px; height: 16px; margin: 4px 0 0 9px; border-radius: 50%; background: #0f65b5; color: #fff; font: 700 12px/16px "Noto Sans", sans-serif; }
.ribbon { height: 93px; flex: none; background: #f5f6f7; border-top: 1px solid #dadbdc; border-bottom: 1px solid #dadbdc; display: flex; }
.group { display: flex; flex-direction: column; height: 91px; border-right: 1px solid #e0e1e2; }
.g-clip { width: 263px; } .g-org { width: 169px; } .g-new { width: 79px; } .g-open { width: 132px; } .g-sel { width: 115px; }
.gbody { height: 74px; display: flex; }
.glabel { text-align: center; color: #555; line-height: 16px; height: 17px; }
.g-org .glabel { padding-right: 8px; }
.g-new .glabel { padding-right: 6px; }
.big { display: flex; flex-direction: column; align-items: center; text-align: center; line-height: 13px; padding-top: 5px; white-space: nowrap; }
.bigico { width: 24px; height: 24px; margin: 5px 0 7px; }
.pinico { margin: 8px 0 5px; }
.copyico { height: 30px; width: 26px; margin: 4px 0 3px; }
.pasteico { height: 30px; width: 22px; margin: 4px 0 3px; }
.w-pin { width: 62px; margin-left: 8px; }
.w-copy { width: 42px; margin-left: 2px; }
.w-paste { width: 42px; }
.dis { color: #8a8a8a; }
.smalls { display: flex; flex-direction: column; padding-top: 3px; }
.sm { height: 22px; display: flex; align-items: center; gap: 2px; white-space: nowrap; }
.ic16 { width: 16px; height: 16px; }
.s-clip { margin-left: 4px; }
.rows2 { padding-top: 8px; display: flex; flex-direction: column; }
.sm2 { height: 29px; display: flex; align-items: center; gap: 1px; white-space: nowrap; }
.r-move { margin-left: 9px; width: 76px; }
.vsep { width: 1px; height: 58px; margin-top: 10px; background: #e6e7e8; }
.r-del { margin-left: 7px; }
.r-del .sm2 { gap: 4px; }
.ic14 { width: 14px; height: 14px; }
.ren { width: 16px; margin-left: -1px; }
.caret { width: 0; height: 0; border: 3px solid transparent; border-top: 3px solid #444; border-bottom: 0; margin-left: 4px; }
.caret.light { border-top-color: #bbb; }
.caret.dark { border-top-color: #333; margin-left: 1px; }
.caret.center { margin: 8px 0 0; }
.w-newf { width: 42px; padding-top: 10px; }
.newico { width: 20px; height: 28px; margin-bottom: 4px; }
.newsm { display: flex; flex-direction: column; gap: 4px; padding-top: 7px; margin-left: 2px; }
.ns { display: flex; align-items: center; }
.ic20 { width: 20px; height: 17px; }
.w-prop { width: 64px; padding-top: 9px; }
.propico { width: 22px; height: 28px; margin-bottom: 5px; }
.s-open { margin-left: 1px; }
.s-sel { margin-left: 8px; }
.s-sel .sm { gap: 3px; }
.addrbar { height: 35px; flex: none; display: flex; align-items: center; padding-bottom: 2px; }
.nav { width: 14px; height: 12px; }
.nav-back { margin-left: 12px; }
.nav-fwd { margin-left: 16px; }
.nav-dn { width: 8px; height: 5px; margin-left: 11px; }
.nav-up { width: 12px; height: 14px; margin-left: 11px; }
.addr { width: 456px; height: 22px; margin-left: 4px; border: 1px solid #d9d9d9; display: flex; align-items: center; padding-left: 7px; }
.addr-folder { width: 13px; height: 17px; }
.bc-more { margin-left: 10px; color: #666; }
.bc { margin-left: 7px; white-space: nowrap; color: #222; }
.bc-sep { width: 6px; height: 9px; margin-left: 8px; }
.bc-last { margin-left: 8px; }
.addr-dd { width: 10px; height: 6px; margin-left: auto; margin-right: 3px; }
.addr-ref { width: 17px; height: 20px; border-left: 1px solid #d9d9d9; display: flex; align-items: center; justify-content: center; }
.refico { width: 12px; height: 12px; }
.search { width: 202px; height: 22px; margin-left: 12px; border: 1px solid #d9d9d9; display: flex; align-items: center; justify-content: space-between; padding: 0 8px; color: #666; }
.mag { width: 12px; height: 12px; }
.content { height: 388px; flex: none; display: flex; }
.tree { width: 156px; display: flex; flex: none; }
.tree-list { width: 140px; margin: 0; padding: 0; list-style: none; overflow: hidden; }
.tree-list li { height: 24px; display: flex; align-items: center; white-space: nowrap; color: #222; }
.tf { width: 14px; height: 18px; flex: none; }
.ts { width: 16px; height: 16px; flex: none; }
.tree-list span { margin: -1px 0 0 5px; }
.l0 { padding-left: 50px; } .l1 { padding-left: 58px; } .l2 { padding-left: 66px; }
.l2s { padding-left: 64px; }
.l3 { padding-left: 74px; } .l4 { padding-left: 82px; } .l5 { padding-left: 90px; }
.tree-list .sel { background: #cdcdcd; }
.vscroll { width: 16px; display: flex; flex-direction: column; align-items: center; background: #f0f0f0; }
.sa { width: 10px; height: 6px; margin: 5px 0; flex: none; }
.track { flex: 1; width: 100%; }
.thumb { background: #cdcdcd; width: 100%; }
.t-tree { height: 71px; margin-top: 160px; }
.t-list { height: 31px; margin-top: 305px; }
.pane { width: 622px; margin-left: 5px; display: flex; flex-direction: column; }
.pane-top { height: 370px; display: flex; }
.listwrap { width: 607px; overflow: hidden; }
.list-scroll { width: 15px; height: 370px; }
.lhead { height: 26px; position: relative; display: flex; background: #fff; z-index: 1; color: #4c607a; line-height: 26px; }
.h { display: block; border-right: 1px solid #e5e5e5; height: 26px; }
.h-name { width: 271px; padding-left: 16px; }
.h-date { width: 144px; padding-left: 6px; }
.h-type { width: 120px; padding-left: 6px; }
.h-size { flex: 1; padding-left: 7px; border-right: 0; }
.sortcaret { position: absolute; left: 135px; top: 0; width: 10px; height: 6px; }
.rows { margin: -14px 0 0 13px; }
.row { height: 21px; display: grid; grid-template-columns: 264px 144px 1fr 40px; align-items: center; color: #555; }
.row .n { display: flex; align-items: center; color: #222; white-space: nowrap; }
.hov { background: #e5f3ff; }
.fi { width: 13px; height: 16px; margin: 0 4px 0 7px; }
.s { text-align: right; }
.hscroll { height: 17px; display: flex; align-items: center; background: #f0f0f0; width: 607px; }
.sah { width: 6px; height: 10px; margin: 0 5px; flex: none; }
.hthumb { width: 556px; height: 17px; background: #cdcdcd; }
.hrest { flex: 1; }
.status { flex: 1; display: flex; align-items: center; justify-content: space-between; padding-left: 14px; color: #444; }
.count { margin-top: -2px; }
.views { display: flex; align-items: center; padding-right: 9px; }
.v-det { width: 21px; height: 21px; background: #cce8ff; border: 1px solid #66b8ee; display: flex; align-items: center; justify-content: center; }
.v-ico { width: 16px; height: 14px; }
.v-lrg { width: 14px; display: flex; justify-content: center; margin-left: 4px; }
.v-ico2 { width: 14px; height: 12px; }

/* overlays */
.sysinfo { position: absolute; right: 4px; top: 629px; display: flex; flex-direction: column; align-items: flex-end; color: #fff; font-size: 11.5px; line-height: 16px; }
.edition { margin-top: 1px; }
.build { margin-top: 2px; font-size: 11px; }
.watermark { position: absolute; left: 1039px; top: 610px; height: 58px; display: flex; align-items: center; color: #a9c0e8; opacity: .85; }
.wm-t { font: 400 50px/58px "Liberation Sans", sans-serif; display: block; transform-origin: left center; white-space: nowrap; }
.wm-any { width: 71px; transform: scaleX(.61); }
.wm-logo { width: 55px; height: 58px; }
.wm-run { width: 66px; margin-left: 8px; transform: scaleX(.53); }

/* taskbar */
.taskbar { position: absolute; left: 0; right: 0; bottom: 0; height: 40px; background: #04141f; display: flex; align-items: center; }
.start { width: 16px; height: 16px; margin-left: 16px; }
.searchbox { width: 288px; height: 40px; margin-left: 16px; background: #f2f2f2; border-top: 1px solid #ccc; display: flex; align-items: center; position: relative; overflow: hidden; }
.sb-mag { width: 16px; height: 16px; margin-left: 12px; }
.sb-text { margin-left: 12px; font-size: 14px; color: #333; }
.doodle { position: absolute; right: 5px; top: 0; width: 72px; height: 40px; }
.taskview { width: 16px; height: 16px; margin-left: 16px; }
.tb-item { height: 40px; display: flex; align-items: center; justify-content: center; }
.ti-edge { margin-left: 23px; width: 40px; box-shadow: inset 0 -2px 0 #8dbdec; }
.ti-exp { margin-left: 5px; width: 48px; background: #2c3a45; box-shadow: inset 0 -2px 0 #8dbdec; }
.ti-fox { margin-left: 2px; width: 46px; }
.tb-app { width: 24px; height: 24px; }
.tray { margin-left: auto; display: flex; align-items: center; height: 40px; }
.tr { width: 16px; height: 16px; margin-right: 8px; }
.tr-up { width: 12px; height: 8px; margin-right: 10px; }
.tr-last { margin-right: 0; }
.clock { width: 72px; display: flex; flex-direction: column; align-items: center; color: #fff; line-height: 18px; margin-top: 1px; }
.notif { width: 16px; height: 16px; margin-left: 8px; }
.showdesk { width: 1px; height: 40px; background: #55606a; margin-left: 21px; margin-right: 3px; }
```
